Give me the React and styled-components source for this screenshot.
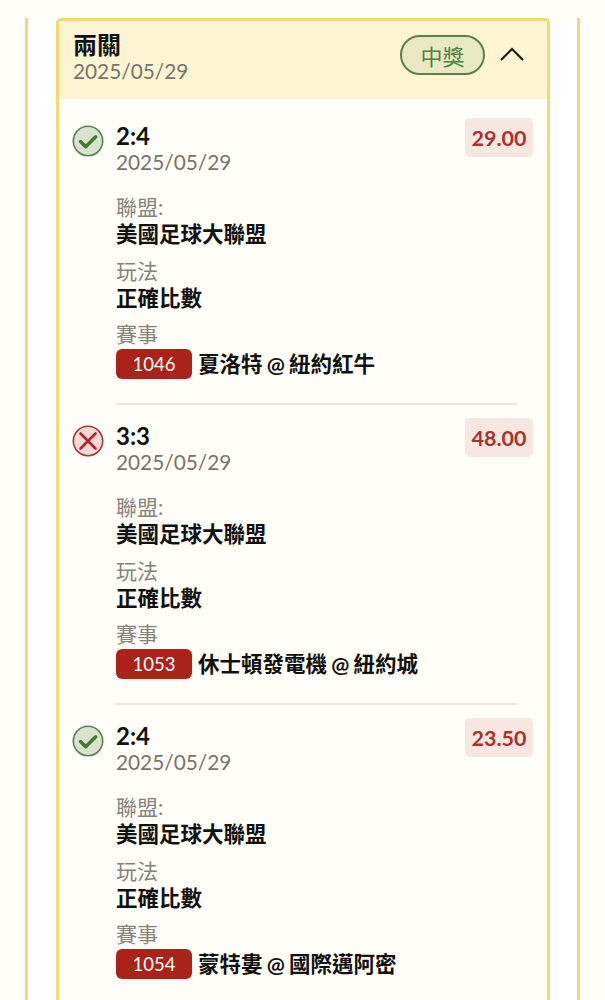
import styled, { createGlobalStyle } from "styled-components";

const GlobalStyle = createGlobalStyle`
  html, body {
    margin: 0;
    height: 1000px;
    overflow: hidden;
    background: #fffef8;
    font-family: Lato, "Noto Sans CJK TC", sans-serif;
  }
`;

const Panel = styled.div`
  margin: 18px 25px 0;
  height: 982px;
  overflow: hidden;
  background: #fff;
  border-left: 3px solid #f1da71;
  border-right: 3px solid #f1da71;
  padding-left: 28px;
  padding-right: 28px;
`;

const Card = styled.div`
  width: 494px;
  min-height: 1100px;
  box-sizing: border-box;
  background: #fffef8;
  border: 3px solid #f1da71;
  border-bottom: 0;
  border-radius: 5px 5px 0 0;
`;

const Header = styled.div`
  height: 78px;
  box-sizing: border-box;
  padding: 10px 22px 0 14px;
  background: #fcf4d3;
  display: flex;
  justify-content: space-between;
  align-items: flex-start;
`;

const HeaderTitle = styled.div`
  font-size: 24px;
  line-height: 27px;
  font-weight: 700;
  color: #111;
`;

const HeaderDate = styled.div`
  font-size: 20.8px;
  line-height: 25px;
  color: #77746a;
`;

const HeaderRight = styled.div`
  display: flex;
  align-items: center;
  gap: 14px;
  padding-top: 4px;
`;

const WinBadge = styled.div`
  width: 85px;
  height: 40px;
  box-sizing: border-box;
  border: 2px solid #5d7f4c;
  border-radius: 20px;
  background: #e8e9c4;
  color: #4f8140;
  font-size: 22px;
  display: flex;
  align-items: center;
  justify-content: center;
`;

const Chevron = styled.svg`
  width: 26px;
  height: 16px;
  margin-top: -3px;
`;

const Leg = styled.div`
  padding: 13px 14px 0 13px;
  display: grid;
  grid-template-columns: 32px 1fr;
  column-gap: 12px;

  ${Header} + & {
    padding-top: 19px;
  }
`;

const StatusIcon = styled.svg`
  width: 32px;
  height: 32px;
  margin-top: 7px;
  display: block;
`;

const LegBody = styled.div`
  min-width: 0;
`;

const LegHead = styled.div`
  display: flex;
  justify-content: space-between;
  align-items: flex-start;
`;

const Score = styled.div`
  font-size: 24px;
  line-height: 28px;
  font-weight: 700;
  color: #111;
  margin-top: 4px;
`;

const LegDate = styled.div`
  font-size: 20.8px;
  line-height: 24px;
  color: #77746a;
`;

const Odds = styled.div`
  width: 68px;
  height: 39px;
  border-radius: 5px;
  background: #f6e8e0;
  color: #ab3030;
  font-size: 21.5px;
  font-weight: 700;
  display: flex;
  align-items: center;
  justify-content: center;
`;

const Field = styled.div`
  margin-top: ${(p) => p.$gap ?? 7.5}px;
`;

const FieldLabel = styled.div`
  font-size: 21px;
  line-height: 27px;
  color: #85827a;
`;

const FieldValue = styled.div`
  font-size: 21.5px;
  line-height: 29px;
  font-weight: 700;
  color: #111;
`;

const MatchRow = styled(FieldValue)`
  display: flex;
  align-items: center;
  gap: 6px;
  margin-top: 2px;
  word-spacing: -1px;
`;

const EventCode = styled.span`
  width: 76px;
  height: 30px;
  border-radius: 6px;
  background: #ab2218;
  color: #fff;
  font-size: 18.5px;
  font-weight: 400;
  display: flex;
  align-items: center;
  justify-content: center;
`;

const Divider = styled.div`
  height: 2px;
  margin: 24px 16px 0 0;
  background: #e9e8e2;
`;

const WonIcon = () => (
  <StatusIcon viewBox="0 0 32 32">
    <circle cx="16" cy="16" r="14.7" fill="#d8e2cd" stroke="#5d7f55" strokeWidth="1.6" />
    <path d="M8.5 16.5l5.2 5.2 10-10" fill="none" stroke="#447a33" strokeWidth="3.4" strokeLinecap="round" strokeLinejoin="round" />
  </StatusIcon>
);

const LostIcon = () => (
  <StatusIcon viewBox="0 0 32 32">
    <circle cx="16" cy="16" r="14.7" fill="#f3d9d4" stroke="#a33a3a" strokeWidth="1.6" />
    <path d="M8.5 8.5l15 15M23.500 8.500l-15 15" fill="none" stroke="#b4232a" strokeWidth="2.6" strokeLinecap="round" />
  </StatusIcon>
);

const legs = [
  { score: "2:4", odds: "29.00", code: "1046", match: "夏洛特 @ 紐約紅牛", won: true },
  { score: "3:3", odds: "48.00", code: "1053", match: "休士頓發電機 @ 紐約城", won: false },
  { score: "2:4", odds: "23.50", code: "1054", match: "蒙特婁 @ 國際邁阿密", won: true },
];

const App = () => (
  <>
    <GlobalStyle />
    <Panel>
      <Card>
        <Header>
          <div>
            <HeaderTitle>兩關</HeaderTitle>
            <HeaderDate>2025/05/29</HeaderDate>
          </div>
          <HeaderRight>
            <WinBadge>中獎</WinBadge>
            <Chevron viewBox="0 0 26 16">
              <path d="M2 14L13 3l11 11" fill="none" stroke="#1c1c1c" strokeWidth="2.2" />
            </Chevron>
          </HeaderRight>
        </Header>
        {legs.map((leg, i) => (
          <Leg key={leg.code}>
            {leg.won ? <WonIcon /> : <LostIcon />}
            <LegBody>
              <LegHead>
                <div>
                  <Score>{leg.score}</Score>
                  <LegDate>2025/05/29</LegDate>
                </div>
                <Odds>{leg.odds}</Odds>
              </LegHead>
              <Field $gap={19}>
                <FieldLabel>聯盟:</FieldLabel>
                <FieldValue>美國足球大聯盟</FieldValue>
              </Field>
              <Field>
                <FieldLabel>玩法</FieldLabel>
                <FieldValue>正確比數</FieldValue>
              </Field>
              <Field>
                <FieldLabel>賽事</FieldLabel>
                <MatchRow>
                  <EventCode>{leg.code}</EventCode>
                  {leg.match}
                </MatchRow>
              </Field>
              {i < legs.length - 1 && <Divider />}
            </LegBody>
          </Leg>
        ))}
      </Card>
    </Panel>
  </>
);

export default App;
